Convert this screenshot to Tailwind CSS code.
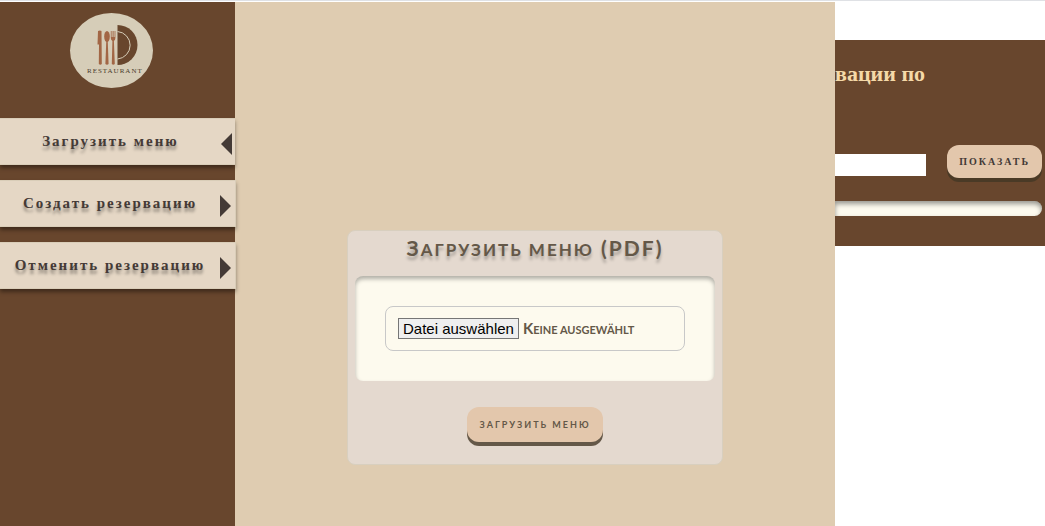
<!DOCTYPE html>
<html lang="ru">
<head>
<meta charset="utf-8">
<meta name="viewport" content="width=device-width, initial-scale=1">
<title>Restaurant</title>
<script src="https://cdn.jsdelivr.net/npm/@tailwindcss/browser@4"></script>
</head>
<body class="min-h-screen flex flex-col bg-white font-['Liberation_Serif',serif]">
<div class="h-px mb-px bg-[#dfe1e5]"></div>
<div class="flex flex-1">
  <aside class="w-[235px] shrink-0 bg-[#68462d] relative z-10">
    <a href="#" aria-label="Restaurant" class="block w-[84px] ml-[69px] pt-[10px]">
      <svg viewBox="0 0 84 76" class="block w-full">
        <ellipse cx="42.500" cy="38.500" rx="41.500" ry="37.500" fill="#d6cdb8"/>
        <path d="M48.500 13a20 20 0 0 1 0 40z" fill="#68462d"/>
        <path d="M48.500 19.500a13.800 13.800 0 0 1 0 27.500" fill="none" stroke="#d6cdb8" stroke-width="1"/>
        <g fill="#a26645">
          <path d="M29 19q2-1 3.500 0l.300 33q-1.500 1.500-3 0l.200-19.500h-1.500z"/>
          <ellipse cx="38" cy="24.500" rx="2.800" ry="5.500"/>
          <path d="M37.300 28h1.400l.900 24q-1.600 1.500-3.200 0z"/>
          <path d="M41.800 19h.8v6h1v-6h1v6h1v-6h.8v7q0 2-1.500 3l.900 23q-1.500 1.500-3 0l.600-23q-1.600-1-1.600-3z"/>
        </g>
        <text x="18" y="60.500" font-family="Liberation Serif, serif" font-size="7" letter-spacing="1" fill="#4a3a2c">RESTAURANT</text>
      </svg>
    </a>
    <nav class="mt-[30px] flex flex-col gap-[15px] text-[15px] font-bold tracking-[2px] text-[#443a36]">
      <button type="button" class="h-[47px] w-full flex items-center bg-[#e5d7c5] border border-l-0 border-r-0 border-[#d9cdb8] shadow-[0_3px_4px_rgba(0,0,0,0.4)]">
        <span class="flex-1 whitespace-nowrap [text-shadow:0_4px_3px_rgba(0,0,0,0.35)]">Загрузить меню</span>
        <svg viewBox="0 0 11 22" class="w-[11px] h-[22px] mr-[3px] mt-1" fill="#443a36"><path d="M11 0v22L0 11z"/></svg>
      </button>
      <button type="button" class="h-[47px] w-[236px] flex items-center bg-[#e5d7c5] border border-l-0 border-[#d9cdb8] shadow-[0_3px_4px_rgba(0,0,0,0.4)]">
        <span class="flex-1 whitespace-nowrap [text-shadow:0_4px_3px_rgba(0,0,0,0.35)]">Создать резервацию</span>
        <svg viewBox="0 0 11 22" class="w-[11px] h-[22px] mr-1 mt-1" fill="#443a36"><path d="M0 0v22L11 11z"/></svg>
      </button>
      <button type="button" class="h-[47px] w-[236px] flex items-center bg-[#e5d7c5] border border-l-0 border-[#d9cdb8] shadow-[0_3px_4px_rgba(0,0,0,0.4)]">
        <span class="flex-1 whitespace-nowrap [text-shadow:0_4px_3px_rgba(0,0,0,0.35)]">Отменить резервацию</span>
        <svg viewBox="0 0 11 22" class="w-[11px] h-[22px] mr-1 mt-1" fill="#443a36"><path d="M0 0v22L11 11z"/></svg>
      </button>
    </nav>
  </aside>

  <main class="flex-1 bg-[#dfccb1] flex flex-col items-center pt-[228px] font-[Lato,sans-serif] text-[#645848]">
    <form class="w-[376px] rounded-lg border border-[#d8cfbf] bg-[#e4d9cf] px-[7px] pb-[22px] flex flex-col items-center">
      <h2 class="h-[45px] pt-[2px] text-[21px] leading-[30px] font-bold tracking-[2px] whitespace-nowrap [text-shadow:0_4px_3px_rgba(0,0,0,0.25)]">З<span class="text-[17px] uppercase">агрузить меню</span> (PDF)</h2>
      <div class="w-full rounded-lg bg-[#fdfaee] p-[30px] shadow-[inset_0_3px_4px_rgba(0,0,0,0.3)]">
        <label for="menu" class="relative flex items-center h-[45px] px-3 rounded-lg border border-[#c8c8c8]">
          <span class="h-[21px] px-1 border border-[#767676] bg-[#efefef] text-black text-[15px] leading-[19px] whitespace-nowrap font-['Liberation_Sans',sans-serif]">Datei auswählen</span>
          <span class="ml-1 text-[15px] font-bold whitespace-nowrap">K<span class="text-[11px] uppercase">eine ausgewählt</span></span>
          <input id="menu" type="file" accept="application/pdf" class="absolute inset-0 w-full opacity-0">
        </label>
      </div>
      <button type="submit" class="mt-[26px] h-[35px] px-3 rounded-xl bg-[#e3c7ac] text-[9px] font-bold tracking-[2px] whitespace-nowrap shadow-[0_4px_0_#645848]">ЗАГРУЗИТЬ МЕНЮ</button>
    </form>
  </main>

  <section class="w-[210px] shrink-0 pt-[38px]">
    <div class="bg-[#68462d] h-[206px] pr-[3px]">
      <h2 class="pt-5 text-[22px] leading-[28px] font-bold text-[#f5d9a8] whitespace-nowrap">вации по</h2>
      <div class="mt-[57px] flex items-center justify-between">
        <input type="text" aria-label="Дата" class="w-[91px] h-[22px] mt-[6px] bg-white">
        <button type="button" class="h-[33px] px-3 rounded-xl bg-[#e3c7ac] text-[10px] font-bold tracking-[2px] text-[#443a36] shadow-[0_4px_0_#4a3a26]">ПОКАЗАТЬ</button>
      </div>
      <div class="mt-[23px] h-[15px] rounded-r-lg bg-[#fdfaee] shadow-[inset_0_3px_5px_rgba(0,0,0,0.4)]"></div>
    </div>
  </section>
</div>
</body>
</html>
